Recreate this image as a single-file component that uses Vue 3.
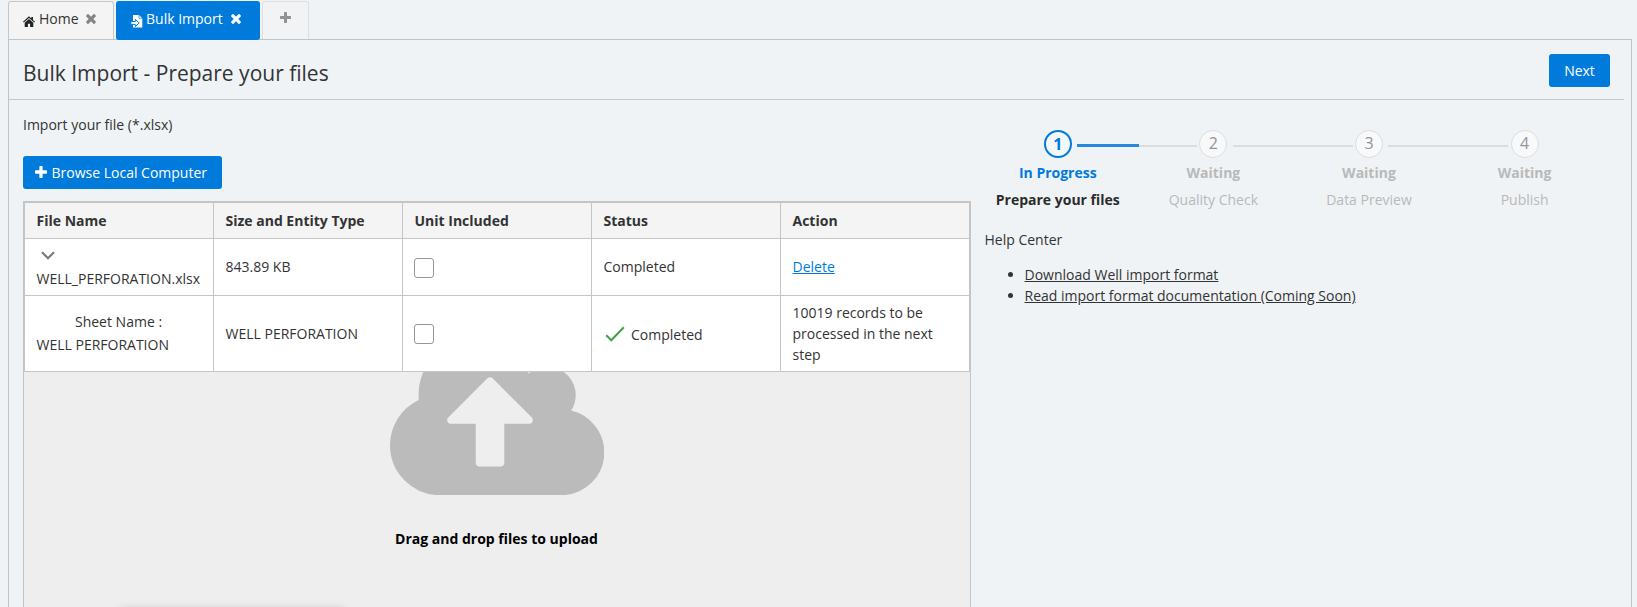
<script setup>
const columns = ['File Name', 'Size and Entity Type', 'Unit Included', 'Status', 'Action']
const steps = [
  { state: 'In Progress', label: 'Prepare your files', active: true },
  { state: 'Waiting', label: 'Quality Check' },
  { state: 'Waiting', label: 'Data Preview' },
  { state: 'Waiting', label: 'Publish' }
]
const times = 'M1298 1214q0 40-28 68l-136 136q-28 28-68 28t-68-28l-294-294-294 294q-28 28-68 28t-68-28l-136-136q-28-28-28-68t28-68l294-294-294-294q-28-28-28-68t28-68l136-136q28-28 68-28t68 28l294 294 294-294q28-28 68-28t68 28l136 136q28 28 28 68t-28 68l-294 294 294 294q28 28 28 68z'
const plus = 'M1408 800v192q0 40-28 68t-68 28h-416v416q0 40-28 68t-68 28h-192q-40 0-68-28t-28-68v-416h-416q-40 0-68-28t-28-68v-192q0-40 28-68t68-28h416v-416q0-40 28-68t68-28h192q40 0 68 28t28 68v416h416q40 0 68 28t28 68z'
</script>

<template>
  <div class="app">
    <nav class="tabs">
      <div class="tab home">
        <svg class="house" viewBox="0 0 12 11"><path d="M6 .3 0 5.800l.8.8L6 1.900l5.200 4.700.8-.8-2-1.850V1H8.300v1.400z" /><path d="M6 2.900 1.700 6.800V11h3.200V7.800h2.200V11h3.200V6.800z" /></svg>
        <span>Home</span>
        <svg class="close" viewBox="110 250 1188 1200"><path :d="times" /></svg>
      </div>
      <div class="tab current">
        <svg class="doc" viewBox="0 0 12 13"><path d="M2 0h6l3.300 3.300V12.500H2z" fill="#fff" /><path d="M8 0v3.300h3.300" fill="none" stroke="#007bdc" stroke-width=".7" /><path d="M.3 6.500h4V4.300L8.200 8 4.300 11.600V9.400H.3" fill="#fff" stroke="#007bdc" stroke-width="1" /></svg>
        <span>Bulk Import</span>
        <svg class="close" viewBox="110 250 1188 1200"><path :d="times" /></svg>
      </div>
      <div class="tab add"><svg viewBox="0 192 1408 1408"><path :d="plus" /></svg></div>
    </nav>

    <main class="panel">
      <header class="head">
        <h1>Bulk Import - Prepare your files</h1>
        <button class="btn next">Next</button>
      </header>
      <div class="body">
        <section class="files">
          <p class="hint">Import your file (*.xlsx)</p>
          <button class="btn browse"><svg viewBox="0 192 1408 1408"><path :d="plus" /></svg>Browse Local Computer</button>
          <div class="zone">
            <table>
              <thead><tr><th v-for="c in columns" :key="c">{{ c }}</th></tr></thead>
              <tbody>
                <tr class="file">
                  <td><div class="name"><svg class="chev" viewBox="0 0 14 9"><path d="M1 1.200 7 7.200 13 1.200" /></svg><span>WELL_PERFORATION.xlsx</span></div></td>
                  <td>843.89 KB</td>
                  <td><i class="check"></i></td>
                  <td>Completed</td>
                  <td><a class="delete">Delete</a></td>
                </tr>
                <tr class="sheet">
                  <td><div class="sheet-name"><span>Sheet Name :</span> WELL PERFORATION</div></td>
                  <td>WELL PERFORATION</td>
                  <td><i class="check"></i></td>
                  <td><div class="done"><svg viewBox="0 0 20 16"><path d="M1.200 9.200 6.300 14.300 18.800 1.200" /></svg>Completed</div></td>
                  <td>10019 records to be processed in the next step</td>
                </tr>
              </tbody>
            </table>
            <div class="drop">
              <svg class="cloud" viewBox="0 128 1920 1408"><path d="M1280 864q0-14-9-23l-352-352q-9-9-23-9t-23 9l-351 351q-10 12-10 24 0 14 9 23t23 9h224v352q0 13 9.500 22.500t22.500 9.500h192q13 0 22.500-9.500t9.500-22.500v-352h224q13 0 22.500-9.500t9.500-22.500zm640 288q0 159-112.500 271.500t-271.500 112.500h-1088q-185 0-316.500-131.500t-131.500-316.500q0-130 70-240t188-165q-2-30-2-43 0-212 150-362t362-150q156 0 285.500 87t188.500 231q71-62 166-62 106 0 181 75t75 181q0 76-41 138 130 31 213.500 135.500t83.500 238.500z" /></svg>
              <strong>Drag and drop files to upload</strong>
            </div>
            <div class="shade"></div>
          </div>
        </section>
        <aside class="side">
          <ol class="steps">
            <li v-for="(s, i) in steps" :key="s.label" :class="{ active: s.active }">
              <span class="num">{{ i + 1 }}</span>
              <span v-if="i < 3" class="line"></span>
              <b>{{ s.state }}</b>
              <span class="label">{{ s.label }}</span>
            </li>
          </ol>
          <p class="help">Help Center</p>
          <ul class="links">
            <li><a>Download Well import format</a></li>
            <li><a>Read import format documentation (Coming Soon)</a></li>
          </ul>
        </aside>
      </div>
    </main>
  </div>
</template>

<style>
body { margin: 0; overflow: hidden; background: #eff3f6; }
</style>

<style scoped>
* { box-sizing: border-box; }
.app { height: 607px; overflow: hidden; padding: 1px 5px 0 8px; display: flex; flex-direction: column; background: #eff3f6; color: #333; font: 14px/21px "Open Sans", sans-serif; }
.tabs { display: flex; height: 38px; flex: none; position: relative; z-index: 1; }
.tab { display: flex; align-items: center; border: 1px solid #c5c7c9; border-bottom: 0; border-radius: 3px 3px 0 0; background: #f4f4f4; padding-bottom: 4px; }
.home { width: 106px; padding-left: 14px; }
.house { width: 12px; height: 11px; margin: 5px 4px 0 0; fill: #222; }
.close { width: 10px; height: 10px; margin: 1px 0 0 8px; fill: #848484; }
.home .close { margin-left: 7px; }
.current { width: 144px; height: 39px; margin-left: 2px; padding: 0 0 6px 14px; background: #007bdc; border-color: #007bdc; color: #fff; border-radius: 3px; }
.current .close { fill: #fff; }
.doc { width: 12px; height: 13px; margin: 6px 3px 0 0; }
.add { width: 47px; margin-left: 2px; padding-bottom: 7px; justify-content: center; border-color: #dcdee0; background: #f1f3f5; }
.add svg { width: 11px; height: 11px; fill: #919196; }
.panel { flex: 1; min-height: 0; border: 1px solid #c0c4c8; border-bottom: 0; display: flex; flex-direction: column; }
.head { height: 60px; flex: none; margin-right: 7px; padding: 0 14px; border-bottom: 1px solid #c5c8cb; display: flex; justify-content: space-between; align-items: flex-start; }
h1 { margin: 17px 0 0; font-size: 21px; line-height: 32px; font-weight: 400; }
.btn { border: 0; border-radius: 3px; height: 33px; background: #007bdc; color: #fff; font: 14px/21px "Open Sans", sans-serif; }
.next { width: 61px; margin-top: 14px; padding: 0; }
.body { display: flex; flex: 1; min-height: 0; padding-left: 14px; }
.files { width: 948px; flex: none; display: flex; flex-direction: column; align-items: flex-start; }
.hint { margin: 14px 0 21px; }
.browse { width: 199px; flex: none; padding: 0 0 0 12px; display: flex; align-items: center; }
.browse svg { width: 12px; height: 12px; margin: 0 4.500px 1px 0; fill: #fff; }
.zone { width: 948px; height: 460px; margin-top: 12px; flex: none; border: 1px solid #c5c5c5; background: #eee; display: grid; position: relative; align-items: start; }
.zone > * { grid-area: 1 / 1; }
table { position: relative; z-index: 1; width: 946px; table-layout: fixed; border-collapse: collapse; background: #fff; }
th, td { border: 1px solid #c5c5c5; padding: 0 8px 0 11.500px; text-align: left; vertical-align: middle; }
th { height: 36px; background: #f4f4f4; font-weight: 700; }
.file td { height: 57px; padding-bottom: 1px; }
.file .check { position: relative; top: 1px; }
.sheet td { height: 76px; }
.name, .sheet-name { display: flex; flex-direction: column; line-height: 23px; }
.chev { width: 14px; height: 9px; margin: 8px 0 7px 4px; fill: none; stroke: #7c7c7c; stroke-width: 2.2; }
.sheet-name { padding-bottom: 2px; }
.sheet-name span { padding-left: 38.500px; }
.check { display: block; width: 20px; height: 20px; margin-left: -.5px; border: 1px solid #959595; border-radius: 3px; background: #fff; }
.delete { color: #007bdc; text-decoration: underline; }
.done { display: flex; align-items: center; padding-top: 1px; }
.done svg { width: 20px; height: 16px; margin: 0 6px 0 1.500px; fill: none; stroke: #43a047; stroke-width: 2; }
.drop { display: flex; flex-direction: column; align-items: center; padding: 136px 1px 0 0; color: #000; }
.cloud { width: 214.3px; height: 157.2px; margin-left: 1px; fill: #bbb; }
.drop strong { margin-top: 33px; font-weight: 700; }
.shade { align-self: start; margin: 408px 0 0 97px; width: 223px; height: 20px; box-shadow: 0 0 10px rgba(0, 0, 0, .22); }
.side { padding-left: 13.500px; width: 640px; }
.steps { display: flex; list-style: none; margin: 30px 0 0 -4.500px; padding: 0; }
.steps li { position: relative; width: 155.6px; display: flex; flex-direction: column; align-items: center; color: #b9b9b9; }
.num { width: 28px; height: 28px; border: 1px solid #dcdddf; border-radius: 50%; background: #f8f9fa; font-size: 16px; line-height: 25px; text-align: center; color: #959595; }
.line { position: absolute; left: 97px; top: 15px; width: 120px; height: 2px; background: #dadcdf; }
.steps b { margin-top: 4px; font-weight: 700; }
.label { margin-top: 6px; }
.active .num { border: 2px solid #007bdc; color: #007bdc; background: #f4f8fb; font-weight: 700; line-height: 24px; }
.active .line::before { content: ''; position: absolute; left: 0; top: -1px; width: 62px; height: 3px; background: #2588dc; }
.steps .active b { color: #007bdc; }
.active .label { color: #2b2b2b; font-weight: 700; }
.help { margin: 19px 0 14px; }
.links { margin: 0; padding-left: 40px; }
.links a { text-decoration: underline; }
</style>
